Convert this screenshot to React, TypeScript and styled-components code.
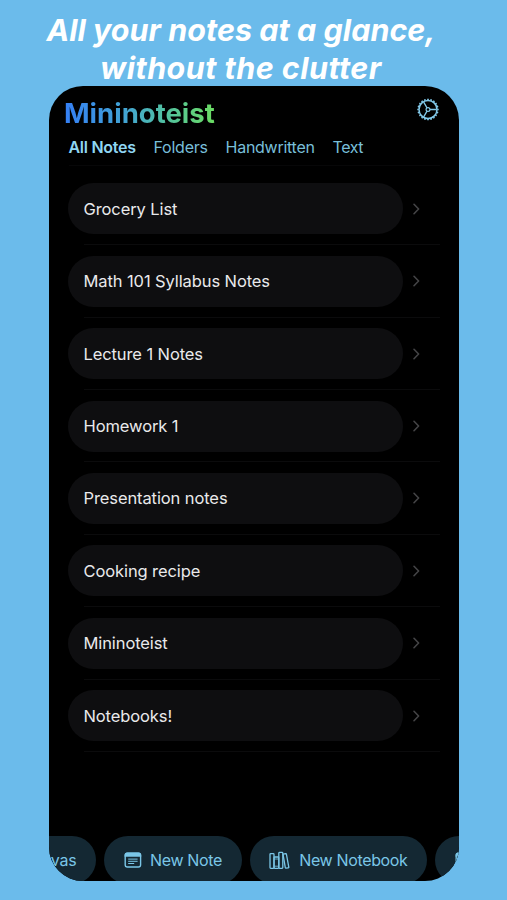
import React from 'react';
import styled, { createGlobalStyle } from 'styled-components';

const GlobalStyle = createGlobalStyle`
  * { box-sizing: border-box; }
  body {
    margin: 0;
    background: #6bbbeb;
    font-family: Inter, "Liberation Sans", sans-serif;
  }
`;

const Page = styled.main`
  width: 507px;
  height: 900px;
  overflow: hidden;
  background: #6bbbeb;
`;

const Headline = styled.h1`
  margin: 0;
  height: 86px;
  padding: 11px 25px 0 0;
  color: #fff;
  font-size: 30.5px;
  font-weight: 750;
  font-style: italic;
  line-height: 37.5px;
  text-align: center;
  white-space: nowrap;
`;

const HeadlineLine = styled.span<{ $spacing: number }>`
  display: block;
  letter-spacing: ${p => p.$spacing}px;
`;

const Phone = styled.section`
  display: flex;
  flex-direction: column;
  width: 409.5px;
  height: 795px;
  margin-left: 49px;
  border-radius: 34px;
  overflow: hidden;
  background: #000;
`;

const Header = styled.header`
  display: flex;
  justify-content: space-between;
  height: 49px;
  padding: 10px 19px 0 15px;
`;

const Brand = styled.h2`
  margin: 0;
  height: 34px;
  font-size: 27.5px;
  font-weight: 650;
  line-height: 34px;
  letter-spacing: 0;
  color: transparent;
  background: linear-gradient(90deg, #347ff5 0%, #42a4d4 40%, #50bfa5 65%, #6bdc62 100%);
  background-clip: text;
  -webkit-background-clip: text;
`;

const Tabs = styled.nav`
  display: flex;
  gap: 17.8px;
  height: 31px;
  margin-left: 19.5px;
  margin-right: 19px;
  border-bottom: 1px solid #070708;
`;

const Tab = styled.a<{ $active?: boolean; $spacing: number }>`
  color: ${p => (p.$active ? '#8fd6f2' : '#78bfd9')};
  font-size: 16px;
  font-weight: ${p => (p.$active ? 600 : 400)};
  line-height: 25px;
  letter-spacing: ${p => p.$spacing}px;
`;

const Notes = styled.ul`
  flex: 1;
  margin: 0;
  padding: 7px 0 0 19px;
  list-style: none;
`;

const NoteRow = styled.li`
  display: grid;
  grid-template-columns: 335px 1fr;
  align-items: center;
  height: 72.36px;
  padding-bottom: 0.4px;
  background: linear-gradient(#0b0b0c, #0b0b0c) 16px 100% / 356px 1px no-repeat;
`;

const NotePill = styled.div`
  display: flex;
  align-items: center;
  height: 51px;
  padding-left: 15.5px;
  border-radius: 25.5px;
  background: #0e0e10;
  color: #e9e9eb;
  font-size: 16.5px;
  letter-spacing: -0.1px;
`;

const Chevron = styled.svg`
  display: block;
  margin-left: 9px;
`;

const Actions = styled.footer`
  display: flex;
  gap: 8px;
  height: 45px;
  margin-left: -99px;
`;

const Action = styled.button<{ $width: number; $align?: string }>`
  display: flex;
  flex: none;
  align-items: center;
  justify-content: ${p => p.$align ?? 'flex-start'};
  width: ${p => p.$width}px;
  height: 48px;
  padding: 0 19.5px;
  border: 0;
  border-radius: 24px;
  background: #142833;
  color: #7ac6e7;
  font: 400 16px Inter, "Liberation Sans", sans-serif;
  white-space: nowrap;
`;

const ActionLabel = styled.span<{ $spacing?: number }>`
  letter-spacing: ${p => p.$spacing ?? 0}px;
`;

const IconSlot = styled.span<{ $width: number }>`
  display: flex;
  width: ${p => p.$width}px;
`;

const notes = [
  'Grocery List',
  'Math 101 Syllabus Notes',
  'Lecture 1 Notes',
  'Homework 1',
  'Presentation notes',
  'Cooking recipe',
  'Mininoteist',
  'Notebooks!',
];

const teeth = Array.from({ length: 20 }, (_, i) => i * 18);

function GearIcon() {
  return (
    <svg width="24" height="27" viewBox="-12 -13.5 24 27" fill="none" stroke="#82c8e8">
      <circle r="9" strokeWidth="1.5" />
      {teeth.map(a => (
        <path key={a} d="M9.2 0H10.7" strokeWidth="1.7" transform={`rotate(${a})`} />
      ))}
      <circle r="1.9" strokeWidth="1.2" />
      <path d="M2 0H8.5M-1 -1.7L-4.3 -7.4M-1 1.7L-4.3 7.4" strokeWidth="1.3" />
    </svg>
  );
}

function NoteIcon() {
  return (
    <svg width="18" height="16" viewBox="0 0 18 16" fill="none" stroke="#7ac6e7">
      <rect x="1.2" y="1.2" width="15.4" height="13.8" rx="2.2" strokeWidth="1.4" />
      <path d="M.6 4.8V3.1Q.6.6 3.1.6H14.7Q17.2.6 17.2 3.1V4.8Z" fill="#7ac6e7" stroke="none" />
      <path d="M4.2 7.1H13.6M4.2 9.3H13.6M4.2 11.5H10.2" strokeWidth="1" />
    </svg>
  );
}

function BooksIcon() {
  return (
    <svg width="21" height="19" viewBox="0 0 21 19" fill="none" stroke="#7ac6e7" strokeWidth="1.3" strokeLinejoin="round">
      <rect x="1" y="2.6" width="4" height="14.8" rx=".8" />
      <rect x="5" y="6" width="4.8" height="11.4" rx=".8" />
      <path d="M5.2 8H9.6M5.2 15.2H9.6" strokeWidth=".8" />
      <rect x="9.8" y="1.4" width="4" height="16" rx=".8" />
      <path d="M14 3.2L16.7 2.7Q17.3 2.6 17.4 3.2L19.8 16.1Q19.9 16.7 19.3 16.8L17 17.2Q16.4 17.3 16.3 16.7Z" />
    </svg>
  );
}

export default function App() {
  return (
    <>
      <GlobalStyle />
      <Page>
        <Headline>
          <HeadlineLine $spacing={0.02}>All your notes at a glance,</HeadlineLine>
          <HeadlineLine $spacing={0.45}>without the clutter</HeadlineLine>
        </Headline>
        <Phone>
          <Header>
            <Brand>Mininoteist</Brand>
            <GearIcon />
          </Header>
          <Tabs>
            <Tab $active $spacing={-0.27}>All Notes</Tab>
            <Tab $spacing={-0.24}>Folders</Tab>
            <Tab $spacing={-0.27}>Handwritten</Tab>
            <Tab $spacing={-0.4}>Text</Tab>
          </Tabs>
          <Notes>
            {notes.map(note => (
              <NoteRow key={note}>
                <NotePill>{note}</NotePill>
                <Chevron width="8" height="12" viewBox="0 0 8 12" fill="none" stroke="#444446" strokeWidth="1.6" strokeLinecap="round" strokeLinejoin="round">
                  <path d="M2 1.3L6.6 6L2 10.7" />
                </Chevron>
              </NoteRow>
            ))}
          </Notes>
          <Actions>
            <Action $width={146} $align="flex-end">
              <ActionLabel $spacing={-0.2}>New Canvas</ActionLabel>
            </Action>
            <Action $width={137.5}>
              <IconSlot $width={27}><NoteIcon /></IconSlot>
              <ActionLabel $spacing={-0.35}>New Note</ActionLabel>
            </Action>
            <Action $width={177.5}>
              <IconSlot $width={31}><BooksIcon /></IconSlot>
              <ActionLabel $spacing={-0.35}>New Notebook</ActionLabel>
            </Action>
            <Action $width={146} aria-label="More">
              <NoteIcon />
            </Action>
          </Actions>
        </Phone>
      </Page>
    </>
  );
}
